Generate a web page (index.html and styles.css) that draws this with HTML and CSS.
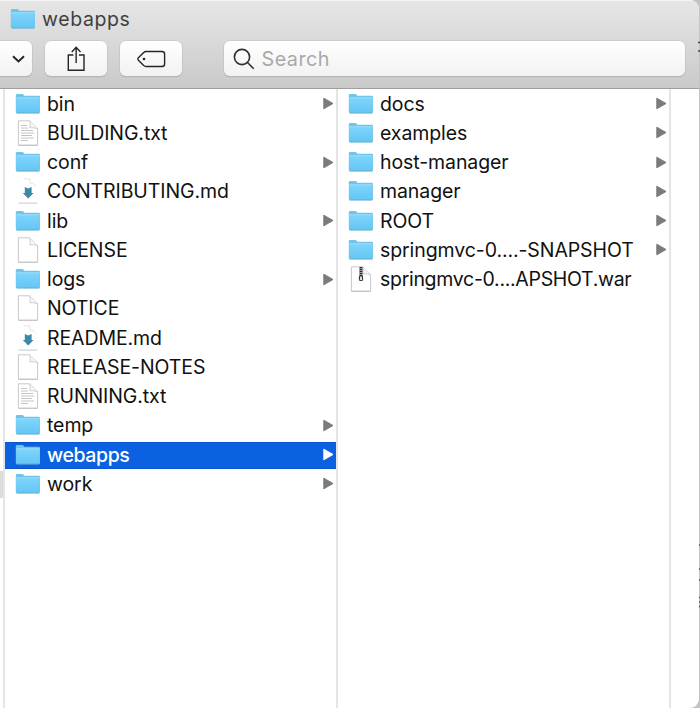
FILE: index.html
```html
<!DOCTYPE html>
<html lang="en">
<head>
<meta charset="utf-8">
<title>webapps</title>
<link rel="stylesheet" href="styles.css">
</head>
<body>
<svg class="defs" aria-hidden="true">
  <defs>
    <linearGradient id="blue" x1="0" y1="0" x2="0" y2="1"><stop offset="0" stop-color="#7ed4fb"/><stop offset="1" stop-color="#65c6f5"/></linearGradient>
    <symbol id="folder" viewBox="0 0 26 22">
      <path d="M.8 2.3Q.8 1 2.1 1H7.2Q8.2 1 8.8 2L9.4 2.8H23.8Q25 2.8 25 4V18.8Q25 20.2 23.8 20.2H2Q.8 20.2.8 18.8Z" fill="#71c4e9"/>
      <path d="M1.2 4.8H24.6V18.6Q24.6 19.7 23.5 19.7H2.3Q1.2 19.7 1.2 18.6Z" fill="url(#blue)"/>
      <path d="M1.3 4.8H24.6" stroke="#a5e3ff" stroke-width=".8"/>
      <path d="M1.5 20H24.4" stroke="#62abcc" stroke-width=".9"/>
    </symbol>
    <symbol id="page" viewBox="0 0 26 26">
      <path d="M3.4.8H14.7L22.6 8.5V25.2H3.4Z" fill="#fff" stroke="#c9c7cc" stroke-width="1"/>
      <path d="M14.7.8Q15.8 4.2 14.8 7.7Q19 7.3 22.6 8.8" fill="#f7f7f8" stroke="#c9c7cc" stroke-width=".9"/>
      <path d="M3.4 25.3H22.6" stroke="#b7b7ba" stroke-width=".7"/>
    </symbol>
    <symbol id="text" viewBox="0 0 26 26">
      <use href="#page"/>
      <path d="M6 5.5H12M6 8H13M6 10.5H18M6 13H19M6 15.5H17M6 18H19M6 20.5H13" stroke="#bdbdbd" stroke-width=".9"/>
    </symbol>
    <symbol id="markdown" viewBox="0 0 26 26">
      <path d="M9 .8H14.7M14.7.8Q15.8 3.5 14.7 5Q19 5.5 21 8" fill="none" stroke="#dedede" stroke-width=".8"/>
      <path d="M3.4 25.1H22.3" stroke="#c8c8c8"/>
      <path d="M9.8 9L13.2 10.6L16.6 9V15H18.6L13.2 20.6L7.8 15H9.8Z" fill="#3e88aa"/>
    </symbol>
    <symbol id="archive" viewBox="0 0 26 26">
      <use href="#page"/>
      <path d="M13 1V15" stroke="#999" stroke-width="3.6"/>
      <path d="M13 1V12" stroke="#222" stroke-width="2.4" stroke-dasharray="1 1"/>
      <rect x="11.4" y="10" width="3.2" height="4.5" rx="1" fill="#ddd" stroke="#222"/>
    </symbol>
    <symbol id="arrow" viewBox="0 0 11 13"><path d="M.8 1.2L10 6.5L.8 11.8Z" fill="currentColor" stroke="currentColor" stroke-linejoin="round"/></symbol>
  </defs>
</svg>
<div class="window">
  <header>
    <div class="title"><svg class="title-icon"><use href="#folder"/></svg><span>webapps</span></div>
    <div class="toolbar">
      <div class="button menu"><svg width="13" height="8" viewBox="0 0 13 8"><path d="M1 1.2L6.5 6.4L12 1.2"/></svg></div>
      <div class="button"><svg width="19" height="26" viewBox="0 0 19 26"><path d="M6.4 9H1.3V24.2H17V9H11.9M9.15 17V1.5M4.8 6L9.15 1.3L13.5 6" class="thin"/></svg></div>
      <div class="button"><svg width="29" height="18" viewBox="0 0 29 18"><path d="M9 1.5H25Q27.6 1.5 27.6 4V14Q27.6 16.5 25 16.5H9Q7.7 16.5 6.7 15.4L1.4 10.2Q.4 9 1.4 7.8L6.7 2.6Q7.7 1.5 9 1.5Z" class="thin"/><circle cx="7" cy="9" r="1.3"/></svg></div>
      <div class="search"><svg width="22" height="22" viewBox="0 0 22 22"><circle cx="9" cy="9" r="7.6"/><path d="M14.5 14.5L20.7 20.7"/></svg><span>Search</span></div>
    </div>
  </header>
  <main>
    <ul class="column first">
      <li><svg class="icon folder"><use href="#folder"/></svg><span>bin</span><svg class="arrow"><use href="#arrow"/></svg></li>
      <li><svg class="icon"><use href="#text"/></svg><span>BUILDING.txt</span></li>
      <li><svg class="icon folder"><use href="#folder"/></svg><span>conf</span><svg class="arrow"><use href="#arrow"/></svg></li>
      <li><svg class="icon"><use href="#markdown"/></svg><span>CONTRIBUTING.md</span></li>
      <li><svg class="icon folder"><use href="#folder"/></svg><span>lib</span><svg class="arrow"><use href="#arrow"/></svg></li>
      <li><svg class="icon"><use href="#page"/></svg><span>LICENSE</span></li>
      <li><svg class="icon folder"><use href="#folder"/></svg><span>logs</span><svg class="arrow"><use href="#arrow"/></svg></li>
      <li><svg class="icon"><use href="#page"/></svg><span>NOTICE</span></li>
      <li><svg class="icon"><use href="#markdown"/></svg><span>README.md</span></li>
      <li><svg class="icon"><use href="#page"/></svg><span>RELEASE-NOTES</span></li>
      <li><svg class="icon"><use href="#text"/></svg><span>RUNNING.txt</span></li>
      <li><svg class="icon folder"><use href="#folder"/></svg><span>temp</span><svg class="arrow"><use href="#arrow"/></svg></li>
      <li class="selected"><svg class="icon folder"><use href="#folder"/></svg><span>webapps</span><svg class="arrow"><use href="#arrow"/></svg></li>
      <li><svg class="icon folder"><use href="#folder"/></svg><span>work</span><svg class="arrow"><use href="#arrow"/></svg></li>
    </ul>
    <ul class="column second">
      <li><svg class="icon folder"><use href="#folder"/></svg><span>docs</span><svg class="arrow"><use href="#arrow"/></svg></li>
      <li><svg class="icon folder"><use href="#folder"/></svg><span>examples</span><svg class="arrow"><use href="#arrow"/></svg></li>
      <li><svg class="icon folder"><use href="#folder"/></svg><span>host-manager</span><svg class="arrow"><use href="#arrow"/></svg></li>
      <li><svg class="icon folder"><use href="#folder"/></svg><span>manager</span><svg class="arrow"><use href="#arrow"/></svg></li>
      <li><svg class="icon folder"><use href="#folder"/></svg><span>ROOT</span><svg class="arrow"><use href="#arrow"/></svg></li>
      <li><svg class="icon folder"><use href="#folder"/></svg><span>springmvc-0....-SNAPSHOT</span><svg class="arrow"><use href="#arrow"/></svg></li>
      <li class="archive"><svg class="icon"><use href="#archive"/></svg><span>springmvc-0....APSHOT.war</span></li>
    </ul>
  </main>
  <i class="previous-selection"></i>
</div>
<svg class="edge" width="3" height="708" viewBox="0 0 3 708"><path d="M0 42.5H3M0 51H3M1 545H3M1 569H3M1 580H3M1 597.5H3M1 602H3M1 606.5H3" stroke="#444" stroke-width="1.5"/></svg>
</body>
</html>
```
FILE: styles.css
```css
* { box-sizing: border-box; }
body {
  margin: 0;
  width: 700px;
  height: 708px;
  overflow: hidden;
  background: #c4c4c4;
  font-family: Inter, "Liberation Sans", sans-serif;
  color: #111;
}
svg { display: block; flex: none; }
.defs { position: absolute; width: 0; height: 0; }
.window {
  position: relative;
  display: flex;
  flex-direction: column;
  width: 699px;
  height: 708px;
  background: #fff;
  border-radius: 0 9px 9px 0;
  overflow: hidden;
}
header {
  flex: none;
  height: 89px;
  background: linear-gradient(#e6e6e6, #cacaca);
  border-top: 1px solid #f4f4f4;
  border-bottom: 1px solid #9e9e9e;
}
.title {
  display: flex;
  align-items: center;
  height: 35px;
  padding-left: 9.5px;
  font-size: 19.5px;
  letter-spacing: .6px;
  color: #3f3f3f;
}
.title-icon { width: 26px; height: 22px; margin-right: 6.5px; }
.toolbar { display: flex; padding-top: 5px; }
.button, .search {
  display: flex;
  align-items: center;
  height: 35px;
  background: linear-gradient(#fff, #f2f2f2);
  border-radius: 6px;
  box-shadow: 0 0 0 .5px #c0c0c0, 0 1px 1px #a5a5a5;
}
.button {
  justify-content: center;
  width: 62px;
  margin-right: 13px;
  fill: none;
  stroke: #252525;
  stroke-width: 2;
}
.thin { stroke-width: 1.4; }
.button circle { fill: #252525; stroke: none; }
.menu { width: 32px; border-radius: 0 6px 6px 0; padding-left: 4px; }
.search {
  width: 461px;
  margin-left: 29px;
  padding-left: 8.5px;
  color: #a9a9a9;
  font-size: 19.8px;
  letter-spacing: .45px;
}
.search svg { margin-right: 7px; fill: none; stroke: #303034; stroke-width: 1.6; }
main { display: flex; flex: 1; padding-left: 3px; }
.column {
  list-style: none;
  margin: 0;
  padding: 0;
  border-right: 2px solid #e5e5e5;
  font-size: 19.5px;
  letter-spacing: -.09px;
}
.first { width: 335px; border-left: 2px solid #e5e5e5; }
.second { width: 333px; }
li {
  display: flex;
  align-items: center;
  height: 29.25px;
  padding: 0 2px 0 9.5px;
  white-space: nowrap;
}
.icon { width: 26px; height: 26px; margin-right: 6.5px; }
.icon.folder { height: 22px; }
.arrow { width: 11px; height: 13px; margin-left: auto; color: #7b7b7b; }
.archive { letter-spacing: -.3px; }
.selected {
  color: #fff;
  font-weight: 500;
  letter-spacing: -.4px;
  background: linear-gradient(#0854d1 1px, #0b61df 1px, #0b61df 26px, #0854d1 26px) 0 1.5px / 100% 27px no-repeat;
}
.selected .arrow { color: #fff; }
.previous-selection {
  position: absolute;
  left: 0;
  top: 471px;
  width: 3px;
  height: 27px;
  background: #dcdcdc;
}
.edge { position: absolute; left: 698px; top: 0; }
```
